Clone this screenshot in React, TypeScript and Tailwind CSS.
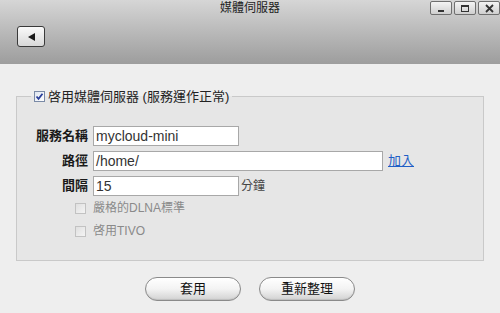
import React from 'react';

const cjk = "font-['Liberation_Sans','Noto_Sans_CJK_TC',sans-serif]";

const WinButton = ({ children }: { children: React.ReactNode }) => (
  <div className="w-[22px] h-[14px] rounded-[2px] border border-[#6f6f6f] bg-gradient-to-b from-[#f4f4f4] to-[#cfcfcf] flex items-center justify-center">
    {children}
  </div>
);

const Box = ({ checked }: { checked?: boolean }) => (
  <span
    className={
      checked
        ? 'w-[11px] h-[11px] border border-[#7a8aa6] bg-gradient-to-br from-[#dfe6f0] to-white flex items-center justify-center'
        : 'w-[11px] h-[11px] border border-[#c2c2c2] bg-gradient-to-br from-[#e0e0e0] to-[#f4f4f4]'
    }
  >
    {checked && (
      <svg width="9" height="9" viewBox="0 0 9 9">
        <path d="M1.5 4.5 L3.5 6.8 L7.5 1.8" stroke="#2a3f9a" strokeWidth="1.8" fill="none" />
      </svg>
    )}
  </span>
);

const Field = ({ label, value, wide, suffix }: { label: string; value: string; wide?: boolean; suffix?: React.ReactNode }) => (
  <div className="flex items-center h-[20px]">
    <span className="w-[76px] text-right text-[13px] font-bold text-[#1a1a1a] pr-[5px]">{label}</span>
    <div
      className={
        (wide ? 'w-[290px] ' : 'w-[146px] ') +
        'h-[20px] bg-white border border-[#a8a8a8] px-[2px] text-[14px] leading-[18px] text-[#333]'
      }
    >
      {value}
    </div>
    {suffix}
  </div>
);

export default function App() {
  return (
    <div className={`w-[500px] h-[313px] bg-[#eeeeee] overflow-hidden ${cjk}`}>
      <div className="h-[64px] bg-gradient-to-b from-[#d6d6d6] to-[#9d9d9d] relative">
        <div className="h-[16px] flex items-center justify-center text-[12px] text-[#1e1e1e]">媒體伺服器</div>
        <div className="absolute top-[1px] right-0 flex gap-[2px]">
          <WinButton>
            <span className="w-[6px] h-[2px] bg-[#333] mt-[5px]" />
          </WinButton>
          <WinButton>
            <span className="w-[8px] h-[7px] border border-[#333] border-t-2" />
          </WinButton>
          <WinButton>
            <svg width="9" height="9" viewBox="0 0 9 9">
              <path d="M1 1 L8 8 M8 1 L1 8" stroke="#333" strokeWidth="1.8" />
            </svg>
          </WinButton>
        </div>
        <div className="ml-[17px] mt-[10px] w-[28px] h-[21px] rounded-[3px] border border-[#3a3a3a] bg-gradient-to-b from-[#fafafa] to-[#d8d8d8] flex items-center justify-center">
          <svg width="7" height="8" viewBox="0 0 7 8">
            <path d="M0 4 L7 0 L7 8 Z" fill="#1a1a1a" />
          </svg>
        </div>
      </div>

      <fieldset className="ml-[16px] mt-[23px] w-[468px] h-[174px] border border-[#c9c9c9] bg-[#e6e6e6] px-0 pb-0">
        <legend className="ml-[14px] px-[3px] flex items-center gap-[3px] text-[13px] text-[#222]">
          <Box checked />
          <span>啓用媒體伺服器 (服務運作正常)</span>
        </legend>
        <div className="mt-[19px] flex flex-col gap-[5px]">
          <Field label="服務名稱" value="mycloud-mini" />
          <Field
            label="路徑"
            value="/home/"
            wide
            suffix={<a className="ml-[5px] text-[13px] text-[#1f5fc6] underline">加入</a>}
          />
          <Field
            label="間隔"
            value="15"
            suffix={<span className="ml-[2px] text-[12px] text-[#444]">分鐘</span>}
          />
        </div>
        <div className="mt-[7px] ml-[58px] flex flex-col gap-[12px] text-[12px] text-[#8a8a8a]">
          <label className="flex items-center gap-[7px] h-[11px]">
            <Box />
            <span>嚴格的DLNA標準</span>
          </label>
          <label className="flex items-center gap-[7px] h-[11px]">
            <Box />
            <span>啓用TIVO</span>
          </label>
        </div>
      </fieldset>

      <div className="mt-[16px] flex justify-center gap-[18px]">
        {['套用', '重新整理'].map(t => (
          <button
            key={t}
            className="w-[96px] h-[24px] rounded-full border border-[#8a8a8a] bg-gradient-to-b from-white via-[#f3f3f3] to-[#d2d2d2] text-[13px] text-[#111] shadow-[inset_0_-1px_1px_rgba(0,0,0,0.1)]"
          >
            {t}
          </button>
        ))}
      </div>
    </div>
  );
}
